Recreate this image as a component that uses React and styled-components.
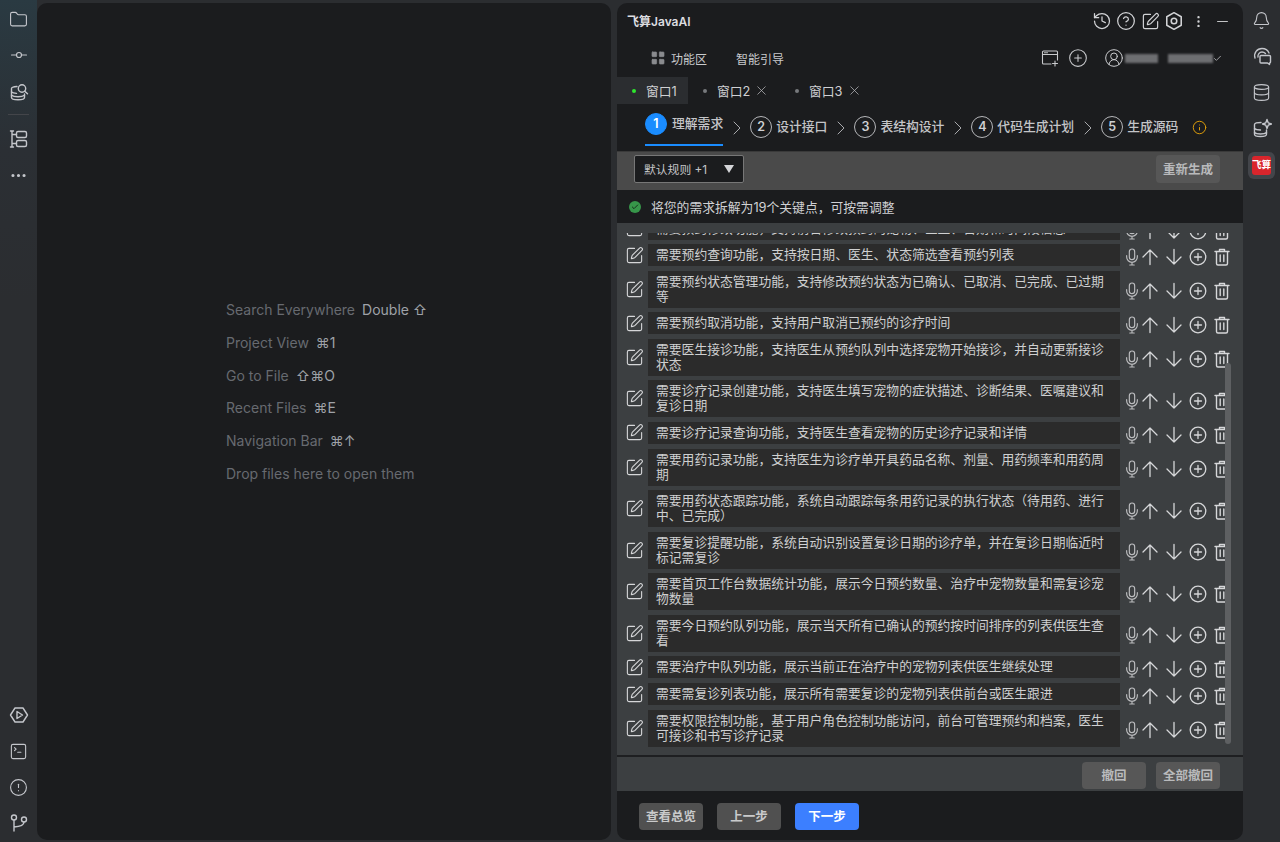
import React from 'react'
import styled, { createGlobalStyle } from 'styled-components'
import {
  Folder, GitCommitHorizontal, Ellipsis, SquareTerminal, CircleAlert, Bell, Database,
  History, CircleHelp, SquarePen, EllipsisVertical, Minus, CirclePlus, CircleUserRound, X,
  ChevronRight, Info, Check, LayoutGrid,
} from 'lucide-react'

const GlobalStyle = createGlobalStyle`
  html, body { margin: 0; height: 842px; overflow: hidden; background: #2b2d30; }
  body { font-family: Inter, "Noto Sans CJK SC", sans-serif; }
  * { box-sizing: border-box; }
`

const Page = styled.div`
  display: flex;
  height: 842px;
  padding: 3px 0 2px;
  background: #2b2d30;
`

const SideBar = styled.aside`
  width: 37px;
  flex: none;
  margin-top: -3px;
  margin-bottom: -2px;
  display: flex;
  flex-direction: column;
  justify-content: space-between;
  color: #c4c6cb;
  padding: ${props => (props.$right ? '2px 0 0' : '1px 0')};
  background: ${props =>
    props.$right ? '#2b2d30' : 'linear-gradient(180deg, #2a3a42 0, #2b2f34 150px, #2b2d30 300px)'};
`

const Group = styled.div`
  display: flex;
  flex-direction: column;
`

const Slot = styled.div`
  height: 36px;
  display: flex;
  align-items: center;
  justify-content: center;
`

const Sep = styled.div`
  height: 1px;
  margin: 5px 8px 6px;
  background: #43454a;
`

const LogoBox = styled.div`
  width: 27px;
  height: 27px;
  margin: 6px 0 0 5px;
  border-radius: 6px;
  background: #43454a;
  display: flex;
  align-items: center;
  justify-content: center;
`

const Logo = styled.div`
  width: 19px;
  height: 19px;
  border-radius: 3px;
  background: #d9252c;
  color: #fff;
  font-size: 9.5px;
  font-weight: 700;
  line-height: 18px;
  white-space: nowrap;
  text-align: center;
`

const Editor = styled.main`
  width: 574px;
  flex: none;
  margin-right: 6px;
  border-radius: 10px;
  background: #1b1c1e;
  padding: 295px 0 0 189px;
`

const Hint = styled.div`
  height: 32.8px;
  font-size: 14px;
  line-height: 24px;
  color: #676a70;
  white-space: nowrap;
`

const Keys = styled.span`
  margin-left: 7px;
  color: #9fa2a8;
`

const Panel = styled.section`
  width: 626px;
  flex: none;
  border-radius: 10px;
  background: #1b1c1e;
  overflow: hidden;
  display: flex;
  flex-direction: column;
  color: #d4d5d8;
`

const TitleBar = styled.header`
  height: 38px;
  flex: none;
  display: flex;
  align-items: center;
  justify-content: space-between;
  padding: 0 11px 2px 10px;
`

const Title = styled.div`
  font-size: 12px;
  font-weight: 600;
  color: #dcdde0;
  margin-bottom: 2px;
`

const TitleIcons = styled.div`
  display: flex;
  gap: 4px;
  color: #d2d3d6;
`

const TitleIcon = styled.span`
  width: 20px;
  height: 20px;
  display: flex;
  align-items: center;
  justify-content: center;
`

const NavBar = styled.div`
  height: 36px;
  flex: none;
  display: flex;
  align-items: center;
  padding: 0 21px 2px 33px;
  font-size: 12px;
  color: #c9cacd;
`

const NavItem = styled.div`
  display: flex;
  align-items: center;
  gap: 5px;
  margin-right: 29px;
  color: #c9cacd;
`

const NavTools = styled.div`
  margin-left: auto;
  display: flex;
  align-items: center;
  color: #c9cacd;
`

const NavTool = styled.span`
  display: flex;
  margin-left: ${props => props.$gap}px;
`

const Blur = styled.span`
  display: block;
  height: 9px;
  width: ${props => props.$w}px;
  margin-left: ${props => props.$gap}px;
  background: #6d6e71;
  filter: blur(1px);
`

const TabBar = styled.div`
  height: 27px;
  flex: none;
  display: flex;
  font-size: 12.8px;
`

const Tab = styled.div`
  display: flex;
  align-items: center;
  width: ${props => props.$w}px;
  padding-left: 15px;
  background: ${props => (props.$active ? '#2b2d30' : 'transparent')};
  color: #cfd0d3;
`

const Dot = styled.span`
  width: 4px;
  height: 4px;
  border-radius: 50%;
  margin-right: 10px;
  background: ${props => (props.$active ? '#2ee62e' : '#77797d')};
`

const CloseIcon = styled(X)`
  margin-left: 4px;
  color: #b5b6b9;
`

const Steps = styled.div`
  height: 47px;
  flex: none;
  display: flex;
  align-items: flex-start;
  padding: 1px 0 0 28px;
  color: #c4c5c8;
`

const Step = styled.div`
  height: 41px;
  display: flex;
  align-items: flex-start;
  gap: ${props => (props.$active ? 5 : 4)}px;
  padding-top: ${props => (props.$active ? 8 : 11)}px;
  font-size: 12.8px;
  font-weight: 500;
  line-height: 22px;
  white-space: nowrap;
  border-bottom: 2px solid ${props => (props.$active ? '#1a8cff' : 'transparent')};
`

const Num = styled.span`
  width: 22px;
  height: 22px;
  border-radius: 50%;
  display: flex;
  align-items: center;
  justify-content: center;
  font-size: 12.5px;
  font-weight: 600;
  color: ${props => (props.$active ? '#fff' : '#cfd0d3')};
  background: ${props => (props.$active ? '#1a8cff' : 'transparent')};
  border: 1px solid ${props => (props.$active ? '#1a8cff' : '#b5b6b9')};
`

const Arrow = styled(ChevronRight)`
  flex: none;
  margin: 11px 1px 0 2px;
  color: #a9aaad;
`

const WarnIcon = styled(Info)`
  margin: 15px 0 0 14px;
  color: #d99a0b;
`

const RuleBar = styled.div`
  height: 39px;
  flex: none;
  display: flex;
  align-items: flex-start;
  justify-content: space-between;
  padding: 3px 23px 0 17px;
  background: #4a4a4a;
  border-top: 1px solid #3a3a3a;
`

const RuleSelect = styled.div`
  width: 110px;
  height: 28px;
  display: flex;
  align-items: center;
  justify-content: space-between;
  padding: 0 9px 1px;
  background: #1b1c1e;
  border: 1px solid #777;
  border-radius: 2px;
  font-size: 11.8px;
  color: #c4c5c8;
`

const Caret = styled.span`
  width: 0;
  height: 0;
  border-left: 5px solid transparent;
  border-right: 5px solid transparent;
  border-top: 8px solid #d4d5d8;
`

const GrayButton = styled.button`
  width: 64px;
  height: ${props => (props.$big ? 28 : 27)}px;
  padding: 0 0 2px;
  border: 0;
  border-radius: 4px;
  background: #575757;
  color: #b9babc;
  font-family: inherit;
  font-size: 12.5px;
  font-weight: 600;
`

const Notice = styled.div`
  height: 33px;
  flex: none;
  display: flex;
  align-items: center;
  gap: 10px;
  padding-left: 12px;
  font-size: 12.8px;
  color: #d0d1d4;
`

const OkBadge = styled.span`
  width: 12px;
  height: 12px;
  border-radius: 50%;
  background: #37964a;
  display: flex;
  align-items: center;
  justify-content: center;
  color: #16301c;
`

const ListArea = styled.div`
  position: relative;
  height: 534px;
  flex: none;
  padding: 10px 0 8px;
  background: #3c3f41;
  border-bottom: 2px solid #1e1f21;
`

const ListClip = styled.div`
  height: 100%;
  overflow: hidden;
`

const List = styled.div`
  margin-top: -15.5px;
  display: flex;
  flex-direction: column;
  gap: 4.58px;
`

const Row = styled.div`
  display: flex;
  align-items: center;
  padding-left: 8px;
`

const EditIcon = styled(SquarePen)`
  flex: none;
  color: #d6d7d9;
  margin-right: 4px;
`

const RowText = styled.div`
  width: 472px;
  flex: none;
  padding: 3px 8px 4px;
  background: #2b2b2b;
  font-size: 12.8px;
  line-height: 15px;
  color: #cfd0d1;
`

const Actions = styled.div`
  display: flex;
  gap: 6px;
  margin-left: 3px;
  padding-top: 4px;
  color: #d6d7d9;
`

const MicWrap = styled.span`
  width: 18px;
  display: flex;
  justify-content: center;
  margin-right: -6px;
  color: #bcbdbf;
`

const ScrollThumb = styled.div`
  position: absolute;
  right: 12px;
  top: 140px;
  width: 6px;
  height: 381px;
  border-radius: 3px;
  background: #5e6062;
`

const Footer = styled.div`
  height: 34px;
  flex: none;
  display: flex;
  justify-content: flex-end;
  gap: 10px;
  padding: 5px 23px 0 0;
  background: #3c3f41;
`

const BottomNav = styled.div`
  flex: 1;
  display: flex;
  gap: 14px;
  padding: 12px 0 0 22px;
`

const NavButton = styled(GrayButton)`
  background: ${props => (props.$primary ? '#3c7fff' : '#505050')};
  color: ${props => (props.$primary ? '#fff' : '#c9cacb')};
`

const stroke = { fill: 'none', stroke: 'currentColor', strokeWidth: 1.4, strokeLinecap: 'round', strokeLinejoin: 'round' }

const DbSearchIcon = () => (
  <svg width="20" height="20" viewBox="0 0 20 20" {...stroke}>
    <path d="M8 5.5C5 5.7 2.5 6.5 2.5 7.5v9c0 1.3 3 2.2 6.5 2.2s6.5-.9 6.5-2.2V13" />
    <path d="M2.5 11c1 .9 2.7 1.3 5 1.4M2.5 14.2c1.4 1.2 4 1.6 6.5 1.6s5-.4 6.5-1.6" />
    <circle cx="13" cy="7.5" r="3.7" />
    <path d="M15.8 10.2 18.5 12.8" />
  </svg>
)

const StructureIcon = () => (
  <svg width="20" height="20" viewBox="0 0 20 20" {...stroke}>
    <rect x="7.5" y="2.5" width="10" height="6" rx="1.5" />
    <rect x="7.5" y="11.5" width="10" height="6" rx="1.5" />
    <path d="M3 2v16M3 5.5h4.5M3 14.5h4.5M1.5 2h3M1.5 18h3" />
  </svg>
)

const RunIcon = () => (
  <svg width="20" height="20" viewBox="0 0 20 20" {...stroke}>
    <path d="M6 3h8l4.5 7-4.5 7H6l-4.500-7z" />
    <path d="M8 6.500 13.500 10 8 13.500z" />
  </svg>
)

const BranchIcon = () => (
  <svg width="20" height="20" viewBox="0 0 20 20" {...stroke}>
    <circle cx="5" cy="4.5" r="2.5" />
    <circle cx="15" cy="6.5" r="2.5" />
    <path d="M5 7v11M15 9c0 3-3 4.5-10 5" />
  </svg>
)

const ChatIcon = () => (
  <svg width="20" height="20" viewBox="0 0 20 20" {...stroke}>
    <path d="M3 12C1.5 7 5 2.5 10 2.5c3.5 0 6 2 7 4.5" />
    <path d="M6 11c-.5-2.5 1.500-5 4-5 1.500 0 2.500.5 3.500 1.500" />
    <path d="M9 9.500h8.500a1 1 0 0 1 1 1V16a1 1 0 0 1-1 1v1.500L15.500 17H9a1 1 0 0 1-1-1v-5.500a1 1 0 0 1 1-1z" />
  </svg>
)

const DbSparkIcon = () => (
  <svg width="20" height="20" viewBox="0 0 20 20" {...stroke}>
    <path d="M9 4.5C5 4.5 2.5 5.2 2.5 6.5v9.8C2.5 17.5 5 18.5 8.5 18.5s6-1 6-2.200V12" />
    <path d="M2.5 10.5c1 1 3.5 1.5 6 1.5M2.5 14.5c1 1 3.5 1.5 6 1.5s5-.5 6-1.5" />
    <path d="M15 1.5l1.2 3.3 3.3 1.2-3.3 1.200L15 10.500l-1.200-3.300-3.300-1.200 3.300-1.200z" />
  </svg>
)

const SettingsHexIcon = () => (
  <svg width="20" height="20" viewBox="0 0 18 18" {...stroke}>
    <path d="M9 1.5 15.5 5.2v7.6L9 16.5l-6.5-3.7V5.2z" />
    <circle cx="9" cy="9" r="2.5" />
  </svg>
)

const NewWindowIcon = () => (
  <svg width="18" height="18" viewBox="0 0 18 18" {...stroke} strokeWidth="1.1">
    <path d="M10 15H2.5a1 1 0 0 1-1-1V3a1 1 0 0 1 1-1H15.500a1 1 0 0 1 1 1v8" />
    <path d="M1.5 5.5h15M3.5 3.800h1M5.500 3.800h1M14 12v5M11.500 14.500h5" />
  </svg>
)

const MicIcon = () => (
  <svg width="16" height="18" viewBox="0 0 18 20" {...stroke} strokeWidth="1.3">
    <rect x="6" y="1" width="6" height="12" rx="3" />
    <path d="M3 8.5V10a6 6 0 0 0 12 0V8.5M9 16v3M6.5 19h5" />
  </svg>
)

const UpIcon = () => (
  <svg width="18" height="18" viewBox="0 0 18 18" {...stroke} strokeWidth="1.3">
    <path d="M9 2v14.5M2 9 9 2l7 7" />
  </svg>
)

const DownIcon = () => (
  <svg width="18" height="18" viewBox="0 0 18 18" {...stroke} strokeWidth="1.3">
    <path d="M9 1.5V16M2 9l7 7 7-7" />
  </svg>
)

const PlusIcon = () => (
  <svg width="18" height="18" viewBox="0 0 18 18" {...stroke} strokeWidth="1.3">
    <circle cx="9" cy="9" r="7.8" />
    <path d="M9 5.5v7M5.5 9h7" />
  </svg>
)

const TrashIcon = () => (
  <svg width="18" height="18" viewBox="0 0 18 18" {...stroke} strokeWidth="1.4">
    <path d="M2 3.5h14M6.5 3.5v-2h5v2M3.5 3.5v12A1.5 1.5 0 0 0 5 17h8a1.5 1.5 0 0 0 1.500-1.500v-12" />
    <path d="M7.2 7v6.5M10.8 7v6.5" />
  </svg>
)

const hints = [
  ['Search Everywhere', 'Double ⇧'],
  ['Project View', '⌘1'],
  ['Go to File', '⇧⌘O'],
  ['Recent Files', '⌘E'],
  ['Navigation Bar', '⌘↑'],
  ['Drop files here to open them', ''],
]

const stepList = [
  { label: '理解需求' },
  { label: '设计接口' },
  { label: '表结构设计' },
  { label: '代码生成计划' },
  { label: '生成源码' },
]

const items = [
  '需要预约修改功能，支持前台修改预约的宠物、医生、日期和时间段信息',
  '需要预约查询功能，支持按日期、医生、状态筛选查看预约列表',
  '需要预约状态管理功能，支持修改预约状态为已确认、已取消、已完成、已过期等',
  '需要预约取消功能，支持用户取消已预约的诊疗时间',
  '需要医生接诊功能，支持医生从预约队列中选择宠物开始接诊，并自动更新接诊状态',
  '需要诊疗记录创建功能，支持医生填写宠物的症状描述、诊断结果、医嘱建议和复诊日期',
  '需要诊疗记录查询功能，支持医生查看宠物的历史诊疗记录和详情',
  '需要用药记录功能，支持医生为诊疗单开具药品名称、剂量、用药频率和用药周期',
  '需要用药状态跟踪功能，系统自动跟踪每条用药记录的执行状态（待用药、进行中、已完成）',
  '需要复诊提醒功能，系统自动识别设置复诊日期的诊疗单，并在复诊日期临近时标记需复诊',
  '需要首页工作台数据统计功能，展示今日预约数量、治疗中宠物数量和需复诊宠物数量',
  '需要今日预约队列功能，展示当天所有已确认的预约按时间排序的列表供医生查看',
  '需要治疗中队列功能，展示当前正在治疗中的宠物列表供医生继续处理',
  '需要需复诊列表功能，展示所有需要复诊的宠物列表供前台或医生跟进',
  '需要权限控制功能，基于用户角色控制功能访问，前台可管理预约和档案，医生可接诊和书写诊疗记录',
]

export default function App() {
  return (
    <Page>
      <GlobalStyle />
      <SideBar>
        <Group>
          <Slot><Folder size={19} strokeWidth={1.4} /></Slot>
          <Slot><GitCommitHorizontal size={20} strokeWidth={1.4} /></Slot>
          <Slot><DbSearchIcon /></Slot>
          <Sep />
          <Slot><StructureIcon /></Slot>
          <Slot><Ellipsis size={19} strokeWidth={2} /></Slot>
        </Group>
        <Group>
          <Slot><RunIcon /></Slot>
          <Slot><SquareTerminal size={19} strokeWidth={1.4} /></Slot>
          <Slot><CircleAlert size={19} strokeWidth={1.4} /></Slot>
          <Slot><BranchIcon /></Slot>
        </Group>
      </SideBar>

      <Editor>
        {hints.map(([label, keys]) => (
          <Hint key={label}>
            {label}
            {keys && <Keys>{keys}</Keys>}
          </Hint>
        ))}
      </Editor>

      <Panel>
        <TitleBar>
          <Title>飞算JavaAI</Title>
          <TitleIcons>
            <TitleIcon><History size={20} strokeWidth={1.5} /></TitleIcon>
            <TitleIcon><CircleHelp size={20} strokeWidth={1.5} /></TitleIcon>
            <TitleIcon><SquarePen size={19} strokeWidth={1.5} /></TitleIcon>
            <TitleIcon><SettingsHexIcon /></TitleIcon>
            <TitleIcon><EllipsisVertical size={15} strokeWidth={1.8} /></TitleIcon>
            <TitleIcon><Minus size={17} strokeWidth={1.3} /></TitleIcon>
          </TitleIcons>
        </TitleBar>

        <NavBar>
          <NavItem><LayoutGrid size={16} fill="#8a8b8e" stroke="#8a8b8e" strokeWidth={1} />功能区</NavItem>
          <NavItem>智能引导</NavItem>
          <NavTools>
            <NavTool $gap={0}><NewWindowIcon /></NavTool>
            <NavTool $gap={9}><CirclePlus size={20} strokeWidth={1.3} /></NavTool>
            <NavTool $gap={16}><CircleUserRound size={20} strokeWidth={1.2} /></NavTool>
            <Blur $w={33} $gap={1} />
            <Blur $w={45} $gap={10} />
            <NavTool $gap={0}><Check size={9} strokeWidth={2} /></NavTool>
          </NavTools>
        </NavBar>

        <TabBar>
          <Tab $active $w={71}><Dot $active />窗口1</Tab>
          <Tab $w={92}><Dot />窗口2<CloseIcon size={15} strokeWidth={1.2} /></Tab>
          <Tab $w={92}><Dot />窗口3<CloseIcon size={15} strokeWidth={1.2} /></Tab>
        </TabBar>

        <Steps>
          {stepList.map((step, i) => (
            <React.Fragment key={step.label}>
              {i > 0 && <Arrow size={24} strokeWidth={1} />}
              <Step $active={i === 0}>
                <Num $active={i === 0}>{i + 1}</Num>
                {step.label}
              </Step>
            </React.Fragment>
          ))}
          <WarnIcon size={15} strokeWidth={1.6} />
        </Steps>

        <RuleBar>
          <RuleSelect>默认规则 +1<Caret /></RuleSelect>
          <GrayButton $big>重新生成</GrayButton>
        </RuleBar>

        <Notice>
          <OkBadge><Check size={8} strokeWidth={3} /></OkBadge>
          将您的需求拆解为19个关键点，可按需调整
        </Notice>

        <ListArea>
          <ListClip>
            <List>
              {items.map(text => (
                <Row key={text}>
                  <EditIcon size={19} strokeWidth={1.4} />
                  <RowText>{text}</RowText>
                  <Actions>
                    <MicWrap><MicIcon /></MicWrap>
                    <UpIcon />
                    <DownIcon />
                    <PlusIcon />
                    <TrashIcon />
                  </Actions>
                </Row>
              ))}
            </List>
          </ListClip>
          <ScrollThumb />
        </ListArea>

        <Footer>
          <GrayButton>撤回</GrayButton>
          <GrayButton>全部撤回</GrayButton>
        </Footer>

        <BottomNav>
          <NavButton>查看总览</NavButton>
          <NavButton>上一步</NavButton>
          <NavButton $primary>下一步</NavButton>
        </BottomNav>
      </Panel>

      <SideBar $right>
        <Group>
          <Slot><Bell size={19} strokeWidth={1.4} /></Slot>
          <Slot><ChatIcon /></Slot>
          <Slot><Database size={19} strokeWidth={1.4} /></Slot>
          <Slot><DbSparkIcon /></Slot>
          <LogoBox><Logo>飞算</Logo></LogoBox>
        </Group>
      </SideBar>
    </Page>
  )
}
